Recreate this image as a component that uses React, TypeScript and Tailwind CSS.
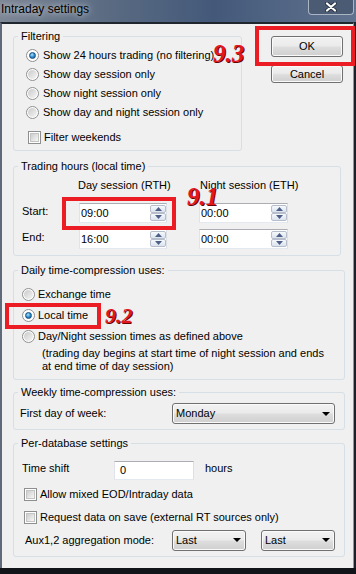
import React from 'react';

function Radio({ checked = false }: { checked?: boolean }) {
  return (
    <span className="flex h-[13px] w-[13px] shrink-0 items-center justify-center rounded-full border border-[#8e8f8f] bg-white">
      {checked ? (
        <span className="h-[7px] w-[7px] rounded-full border border-[#1c4f7c] bg-[radial-gradient(circle_at_40%_35%,#a8e4ff,#2a86c8_55%,#12528a)]" />
      ) : (
        <span className="h-[9px] w-[9px] rounded-full bg-gradient-to-br from-[#c9c9c9] to-[#f6f6f6]" />
      )}
    </span>
  );
}

function Check() {
  return (
    <span className="flex h-[13px] w-[13px] shrink-0 items-center justify-center border border-[#8e8f8f] bg-white">
      <span className="h-[9px] w-[9px] border border-[#c4c4c4] bg-gradient-to-br from-[#cdcdcd] to-[#f7f7f7]" />
    </span>
  );
}

function Group({
  title,
  className = '',
  children,
}: {
  title: string;
  className?: string;
  children: React.ReactNode;
}) {
  return (
    <fieldset className={`rounded-[3px] border border-[#d5dfe5] ${className}`}>
      <legend className="ml-[4px] px-[3px] leading-[14px]">{title}</legend>
      {children}
    </fieldset>
  );
}

function SpinArrow({ up = false }: { up?: boolean }) {
  return (
    <div className="flex h-[8px] w-[16px] items-center justify-center rounded-[2px] border border-[#b6bdcb] bg-gradient-to-b from-[#f7f9fc] to-[#dce3ee]">
      <svg width="7" height="4" viewBox="0 0 7 4">
        <polygon points={up ? '0,4 7,4 3.5,0' : '0,0 7,0 3.5,4'} fill="#4e6088" />
      </svg>
    </div>
  );
}

function TimeBox({ value }: { value: string }) {
  return (
    <div className="flex h-[20px] items-center border border-[#abadb3] border-b-[#e3e9ef] border-l-[#e2e3ea] border-r-[#dbdfe6] bg-white pl-[1px]">
      <span className="flex-1">{value}</span>
      <div className="flex flex-col">
        <SpinArrow up />
        <SpinArrow />
      </div>
    </div>
  );
}

function Combo({ value, className = '' }: { value: string; className?: string }) {
  return (
    <div
      className={`flex h-[21px] items-center rounded-[3px] border border-[#707070] bg-[linear-gradient(#f2f2f2_0%,#ebebeb_45%,#dddddd_55%,#cfcfcf_100%)] pl-[3px] pr-[4px] shadow-[inset_0_0_0_1px_#fafafa] ${className}`}
    >
      <span className="flex-1">{value}</span>
      <svg width="8" height="4" viewBox="0 0 8 4">
        <polygon points="0,0 8,0 4,4" fill="#000" />
      </svg>
    </div>
  );
}

function Button({ label, className = '' }: { label: string; className?: string }) {
  return (
    <div
      className={`flex w-[72px] items-center justify-center rounded-[3px] border border-[#707070] bg-[linear-gradient(#f2f2f2_0%,#ebebeb_45%,#dddddd_55%,#cfcfcf_100%)] shadow-[inset_0_0_0_1px_#fafafa] ${className}`}
    >
      {label}
    </div>
  );
}

export default function App() {
  return (
    <div className="relative flex h-[574px] w-[356px] flex-col overflow-hidden bg-[#1b222b] font-['Liberation_Sans',Arial,sans-serif] text-[11px] text-black">
      {/* title bar */}
      <div className="flex h-[22px] shrink-0 items-start bg-[linear-gradient(90deg,#7d8796_0%,#5a6b82_30%,#44597a_60%,#60728e_100%)]">
        <span className="mt-[2px] pl-[1px] text-[12px] leading-[14px] [text-shadow:0_0_6px_rgba(255,255,255,0.9)]">
          Intraday settings
        </span>
        <div className="ml-auto mr-[2px] flex h-[15px] w-[46px] items-center justify-center rounded-b-[4px] border border-t-0 border-[#aab4c3] bg-[#4a5b73]">
          <svg width="12" height="10" viewBox="0 0 12 10">
            <path d="M2 1.5 L10 8.5 M10 1.5 L2 8.5" stroke="#2a3340" strokeWidth="4" strokeLinecap="round" />
            <path d="M2 1.5 L10 8.5 M10 1.5 L2 8.5" stroke="#fff" strokeWidth="2.2" strokeLinecap="round" />
          </svg>
        </div>
      </div>

      {/* dialog body */}
      <div className="mr-[2px] flex flex-1 flex-col border-l-2 border-r border-t-2 border-l-[#5f6b7a] border-r-[#8d98a6] border-t-[#20262e] bg-[#f0f0f0] pl-[11px] pt-[5px]">
        <div className="flex items-start">
          <Group title="Filtering" className="w-[229px]">
            <div className="pb-[3px] pl-[12px] pt-[3px]">
              <div className="flex h-[19px] items-center gap-[4px]">
                <Radio checked />
                <span>Show 24 hours trading (no filtering)</span>
              </div>
              <div className="flex h-[19px] items-center gap-[4px]">
                <Radio />
                <span>Show day session only</span>
              </div>
              <div className="flex h-[19px] items-center gap-[4px]">
                <Radio />
                <span>Show night session only</span>
              </div>
              <div className="flex h-[19px] items-center gap-[4px]">
                <Radio />
                <span>Show day and night session only</span>
              </div>
              <div className="ml-[2px] mt-[6px] flex h-[19px] items-center gap-[3px]">
                <Check />
                <span>Filter weekends</span>
              </div>
            </div>
          </Group>
          <div className="ml-[29px] mt-[7px] flex flex-col gap-[8px]">
            <Button label="OK" className="h-[21px]" />
            <Button label="Cancel" className="h-[18px]" />
          </div>
        </div>

        <Group title="Trading hours (local time)" className="mt-[8px] w-[328px]">
          <div className="grid grid-cols-[57px_120px_89px] whitespace-nowrap pb-[6px] pl-[8px] pt-[5px]">
            <span />
            <span className="-ml-[1px] h-[14px] leading-[14px]">Day session (RTH)</span>
            <span className="ml-[1px] h-[14px] leading-[14px]">Night session (ETH)</span>
            <span className="mt-[11px] flex h-[20px] items-center pb-[3px]">Start:</span>
            <div className="mt-[11px] w-[88px]">
              <TimeBox value="09:00" />
            </div>
            <div className="mt-[11px]">
              <TimeBox value="00:00" />
            </div>
            <span className="mt-[6px] flex h-[20px] items-center pb-[3px]">End:</span>
            <div className="mt-[6px] w-[88px]">
              <TimeBox value="16:00" />
            </div>
            <div className="mt-[6px]">
              <TimeBox value="00:00" />
            </div>
          </div>
        </Group>

        <Group title="Daily time-compression uses:" className="mt-[7px] w-[332px]">
          <div className="pb-[6px] pl-[8px] pt-[7px]">
            <div className="flex h-[21px] items-center gap-[3px]">
              <Radio />
              <span>Exchange time</span>
            </div>
            <div className="flex h-[21px] items-center gap-[3px]">
              <Radio checked />
              <span>Local time</span>
            </div>
            <div className="flex h-[21px] items-center gap-[3px]">
              <Radio />
              <span>Day/Night session times as defined above</span>
            </div>
            <p className="pl-[20px] leading-[13px]">
              (trading day begins at start time of night session and ends
              <br />
              at end time of day session)
            </p>
          </div>
        </Group>

        <Group title="Weekly time-compression uses:" className="mt-[5px] w-[332px]">
          <div className="flex items-center pb-[5px] pl-[6px] pt-[4px]">
            <span className="w-[152px]">First day of week:</span>
            <Combo value="Monday" className="w-[163px]" />
          </div>
        </Group>

        <Group title="Per-database settings" className="mt-[6px] w-[332px]">
          <div className="pb-[6px] pl-[8px] pt-[10px]">
            <div className="flex h-[20px] items-center">
              <span className="w-[92px] pb-[3px]">Time shift</span>
              <div className="flex h-[19px] w-[80px] items-center border border-[#abadb3] border-b-[#e3e9ef] border-l-[#e2e3ea] border-r-[#dbdfe6] bg-white pl-[5px]">
                0
              </div>
              <span className="ml-[11px] pb-[3px]">hours</span>
            </div>
            <div className="ml-[2px] mt-[4px] flex h-[20px] items-center gap-[3px]">
              <Check />
              <span>Allow mixed EOD/Intraday data</span>
            </div>
            <div className="ml-[2px] mt-[3px] flex h-[20px] items-center gap-[3px]">
              <Check />
              <span>Request data on save (external RT sources only)</span>
            </div>
            <div className="mt-[3px] flex h-[20px] items-center">
              <span className="ml-[3px] w-[147px]">Aux1,2 aggregation mode:</span>
              <Combo value="Last" className="h-[20px] w-[74px]" />
              <Combo value="Last" className="ml-[15px] h-[20px] w-[74px]" />
            </div>
          </div>
        </Group>
      </div>
      <div className="h-[6px] shrink-0 bg-[#111418]" />

      {/* annotations */}
      <div className="absolute left-[255px] top-[26px] h-[40px] w-[100px] border-[4px] border-[#ec1c24]" />
      <div className="absolute left-[62px] top-[197px] h-[33px] w-[114px] border-[4px] border-[#ec1c24]" />
      <div className="absolute left-[5px] top-[303px] h-[26px] w-[96px] border-[4px] border-[#ec1c24]" />
      <span className="absolute left-[213px] top-[45px] font-['Liberation_Serif',serif] text-[25px] font-bold italic leading-[17px] text-[#e4161e] [text-shadow:1px_1px_0_#6a0000]">
        9.3
      </span>
      <span className="absolute left-[187px] top-[188px] font-['Liberation_Serif',serif] text-[25px] font-bold italic leading-[17px] text-[#e4161e] [text-shadow:1px_1px_0_#6a0000]">
        9.1
      </span>
      <span className="absolute left-[105px] top-[308px] font-['Liberation_Serif',serif] text-[22px] font-bold italic leading-[15px] text-[#e4161e] [text-shadow:1px_1px_0_#6a0000]">
        9.2
      </span>
    </div>
  );
}
